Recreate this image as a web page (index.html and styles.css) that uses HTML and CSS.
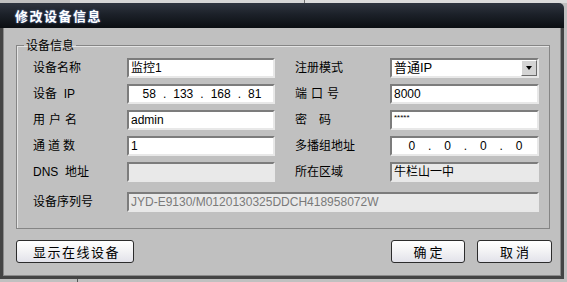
FILE: index.html
```html
<!DOCTYPE html>
<html lang="zh-CN">
<head>
    <meta charset="UTF-8">
    <title>修改设备信息</title>
    <link rel="stylesheet" href="styles.css">
</head>
<body>
    <div class="backdrop-top">
        <span class="bt-a"></span>
        <span class="bt-b"></span>
        <span class="bt-c"></span>
    </div>

    <div class="dialog">
        <div class="titlebar">修改设备信息</div>
        <div class="dlg-body">
            <fieldset class="group">
                <legend>设备信息</legend>
                <div class="form-grid">
                    <label>设备名称</label>
                    <div class="field">监控1</div>
                    <label class="lbl-r">注册模式</label>
                    <div class="field combo"><span class="combo-text">普通IP</span><span class="combo-btn"></span></div>

                    <label>设备  IP</label>
                    <div class="field ip"><span>58</span><i>.</i><span>133</span><i>.</i><span>168</span><i>.</i><span>81</span></div>
                    <label class="lbl-r"><span class="spread w44">端口号</span></label>
                    <div class="field">8000</div>

                    <label><span class="spread w44">用户名</span></label>
                    <div class="field">admin</div>
                    <label class="lbl-r"><span class="spread w36">密码</span></label>
                    <div class="field pwd">*****</div>

                    <label><span class="spread w42">通道数</span></label>
                    <div class="field">1</div>
                    <label class="lbl-r">多播组地址</label>
                    <div class="field ip"><span>0</span><i>.</i><span>0</span><i>.</i><span>0</span><i>.</i><span>0</span></div>

                    <label>DNS  地址</label>
                    <div class="field disabled"></div>
                    <label class="lbl-r">所在区域</label>
                    <div class="field disabled">牛栏山一中</div>

                    <label class="serial-lbl">设备序列号</label>
                    <div class="field disabled serial">JYD-E9130/M0120130325DDCH418958072W</div>
                </div>
            </fieldset>

            <div class="actions">
                <button class="btn btn-wide">显示在线设备</button>
                <div class="actions-right">
                    <button class="btn btn-ok">确定</button>
                    <button class="btn btn-cancel">取消</button>
                </div>
            </div>
        </div>
    </div>

    <div class="backdrop-bottom">
        <span class="bb-a"></span>
        <span class="bb-b"></span>
    </div>
</body>
</html>
```

FILE: styles.css
```css
body, html {
    margin: 0;
    padding: 0;
    background: #c0c0c0;
    font-family: 'Liberation Sans', 'Noto Sans CJK SC', sans-serif;
    font-size: 12px;
    color: #000;
    overflow: hidden;
}

.backdrop-top {
    display: flex;
    height: 3px;
}

.bt-a {
    width: 70px;
    background: #c0c0c0;
}

.bt-b {
    width: 234px;
    background: #d6d6d6;
    border-right: 1px solid #707070;
}

.bt-c {
    flex: 1;
    background: #dcdcdc;
}

.dialog {
    width: 564px;
    height: 276px;
    display: flex;
    flex-direction: column;
}

.titlebar {
    height: 25px;
    line-height: 25px;
    padding-left: 15px;
    background: linear-gradient(#2f3540, #1c2129 45%, #0b0e12);
    border-radius: 0 5px 0 0;
    color: #fff;
    font-family: 'Noto Sans CJK SC', sans-serif;
    font-weight: bold;
    font-size: 13px;
    letter-spacing: 1.5px;
    text-shadow: 0 0 2px #6a8fd0;
}

.dlg-body {
    flex: 1;
    background: #c0c0c0;
    border: 3px solid #444;
    border-top: none;
    box-shadow: inset 1px 0 0 #8a8a8a, inset -1px -1px 0 #8a8a8a;
    padding: 10px 9px 0 13px;
}

.group {
    margin: 0 2px 0 0;
    padding: 6px 0 12px 16px;
    border: 1px solid #858585;
    box-shadow: 1px 1px 0 #e4e4e4 inset;
    height: 191px;
    box-sizing: border-box;
}

.group legend {
    font-family: 'Noto Sans CJK SC', sans-serif;
    font-size: 12px;
    line-height: 14px;
    padding: 0 2px;
    margin-left: -9px;
}

.form-grid {
    display: grid;
    grid-template-columns: 94px 168px 95px 149px;
    grid-auto-rows: 20px;
    row-gap: 6px;
    align-items: center;
}

.form-grid label {
    font-family: 'Liberation Sans', 'Noto Sans CJK SC', sans-serif;
    font-size: 12px;
    line-height: 20px;
    white-space: pre;
}

.spread {
    display: inline-block;
    text-align: justify;
    text-align-last: justify;
}

.w44 { width: 44px; }
.w42 { width: 42px; }
.w36 { width: 36px; }

.serial-lbl {
    margin-top: 8px;
}

.field {
    width: 148px;
    height: 20px;
    box-sizing: border-box;
    background: #fff;
    border: 2px solid;
    border-color: #7c7c7c #e8e8e8 #e8e8e8 #7c7c7c;
    padding: 0 2px;
    line-height: 16px;
    font-size: 12px;
    white-space: nowrap;
    overflow: hidden;
}

.form-grid .field:nth-child(4n) {
    width: 149px;
}

.ip {
    display: flex;
    justify-content: space-around;
    padding: 0 8px 0 10px;
}

.ip i {
    font-style: normal;
}

.pwd {
    font-size: 8px;
    line-height: 12px;
}

.combo {
    display: flex;
    justify-content: space-between;
    padding-right: 0;
}

.combo-text {
    font-size: 13px;
}

.combo-btn {
    width: 16px;
    height: 16px;
    box-sizing: border-box;
    background: #d4d4d4;
    border: 1px solid;
    border-color: #fff #6a6a6a #6a6a6a #fff;
    position: relative;
}

.combo-btn::after {
    content: "";
    position: absolute;
    left: 4px;
    top: 5px;
    border-left: 3px solid transparent;
    border-right: 3px solid transparent;
    border-top: 4px solid #000;
}

.disabled {
    background: #e9e9e9;
}

.serial {
    grid-column: 2 / 5;
    width: 412px !important;
    margin-top: 8px;
    color: #7a7a7a;
}

.actions {
    display: flex;
    justify-content: space-between;
    margin-top: 11px;
}

.actions-right {
    display: flex;
    gap: 12px;
}

.btn {
    height: 23px;
    padding: 0 0 0 3px;
    border: 1px solid #2c2c2c;
    border-radius: 3px;
    background: linear-gradient(#ffffff, #f2f2f4 50%, #e2e2ea);
    font-family: 'Noto Sans CJK SC', sans-serif;
    font-size: 13px;
    letter-spacing: 3px;
    color: #000;
}

.btn-wide {
    width: 118px;
    letter-spacing: 1.5px;
}

.btn-ok {
    width: 74px;
}

.btn-cancel {
    width: 75px;
}

.backdrop-bottom {
    display: flex;
    height: 3px;
}

.bb-a {
    width: 77px;
    border-right: 1px solid #555;
}

.bb-b {
    flex: 1;
}
```
